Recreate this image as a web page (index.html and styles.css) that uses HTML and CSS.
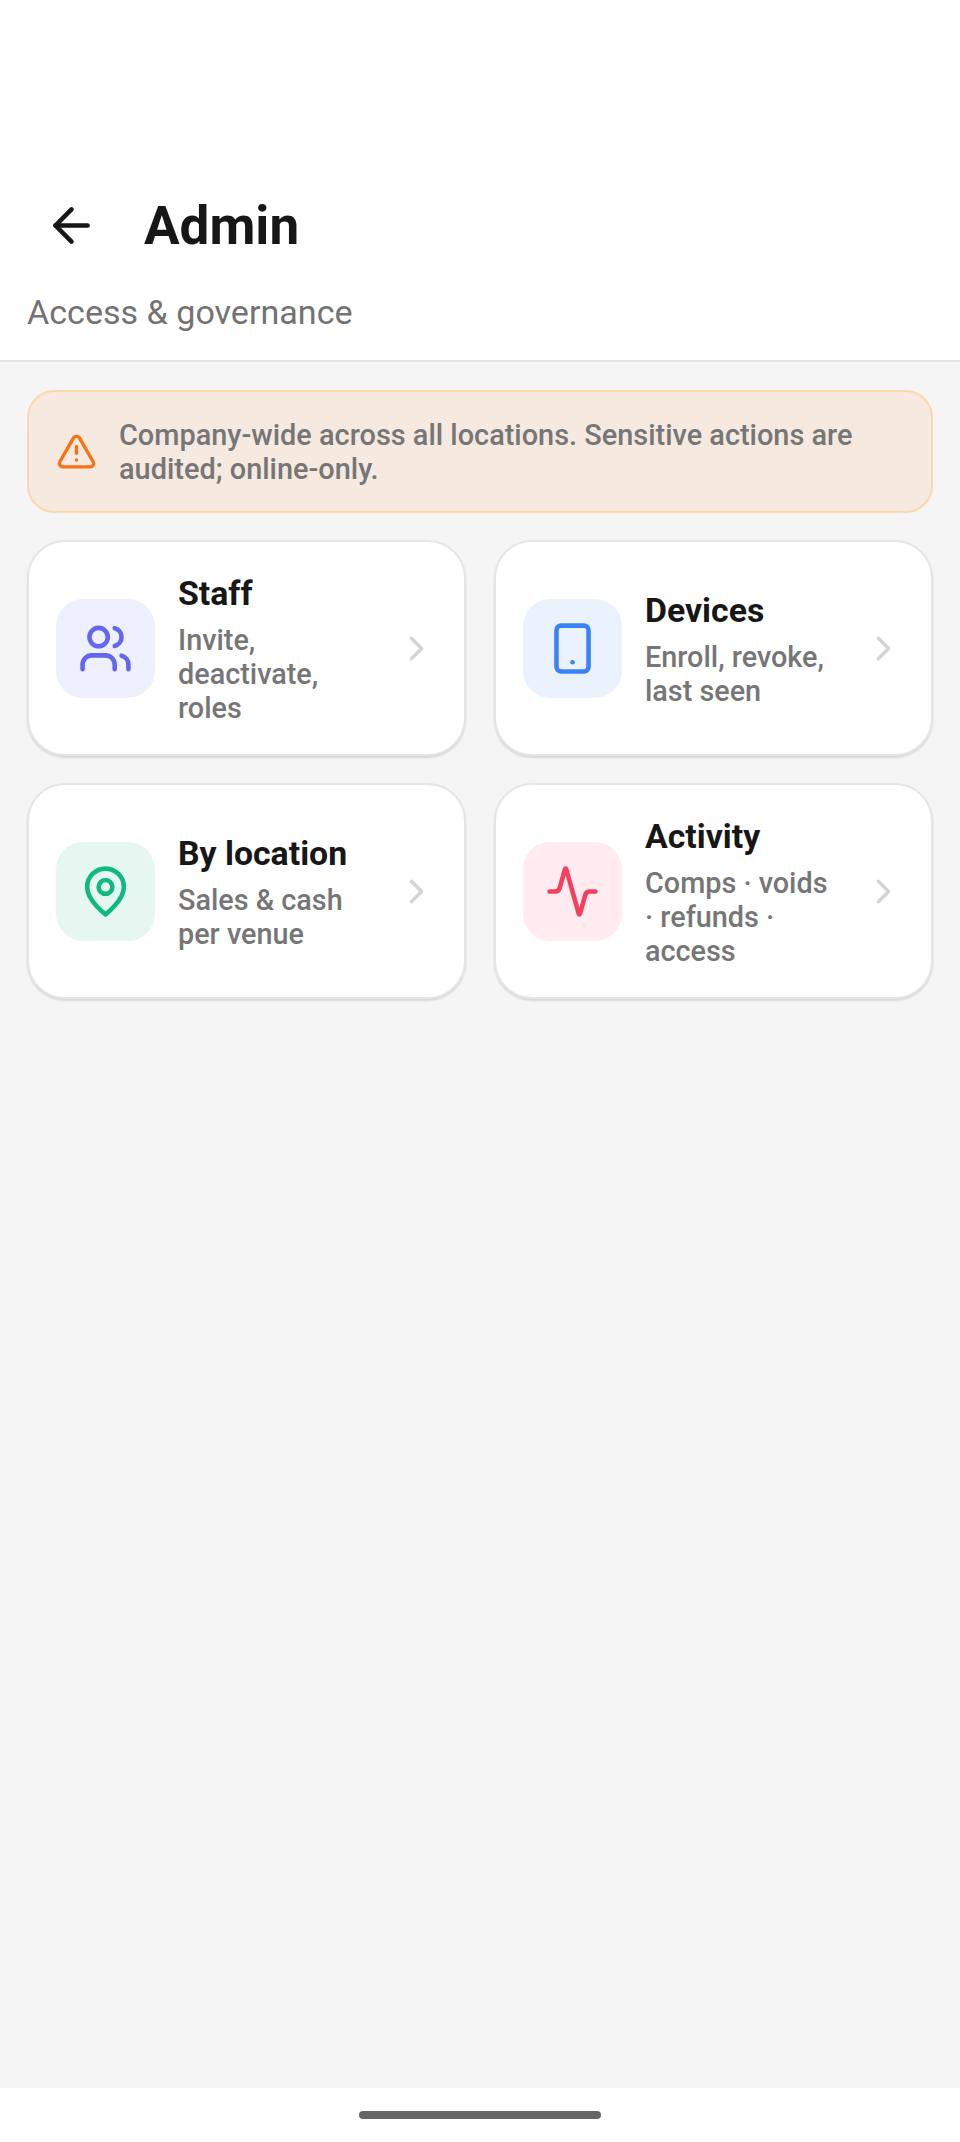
FILE: index.html
```html
<!DOCTYPE html>
<html lang="en">
<head>
    <meta charset="UTF-8">
    <meta name="viewport" content="width=device-width, initial-scale=1.0">
    <title>Admin</title>
    <link rel="stylesheet" href="styles.css">
</head>
<body>
    <div class="screen">
        <header class="header">
            <div class="topbar">
                <svg class="icon back" viewBox="0 0 24 24"><path d="m12 19-7-7 7-7"/><path d="M19 12H5"/></svg>
                <h1>Admin</h1>
            </div>
            <p class="subtitle">Access &amp; governance</p>
        </header>
        <main class="content">
            <div class="notice">
                <svg class="icon notice-icon" viewBox="0 0 24 24"><path d="m21.73 18-8-14a2 2 0 0 0-3.48 0l-8 14A2 2 0 0 0 4 21h16a2 2 0 0 0 1.73-3"/><path d="M12 9v4"/><path d="M12 17h.01"/></svg>
                <p>Company-wide across all locations. Sensitive actions are audited; online-only.</p>
            </div>
            <div class="grid">
                <div class="card">
                    <div class="tile tile-staff">
                        <svg class="icon" viewBox="0 0 24 24"><path d="M16 21v-2a4 4 0 0 0-4-4H6a4 4 0 0 0-4 4v2"/><circle cx="9" cy="7" r="4"/><path d="M22 21v-2a4 4 0 0 0-3-3.87"/><path d="M16 3.13a4 4 0 0 1 0 7.75"/></svg>
                    </div>
                    <div class="card-text">
                        <h2>Staff</h2>
                        <p>Invite, deactivate, roles</p>
                    </div>
                    <svg class="icon chevron" viewBox="0 0 24 24"><path d="m9 18 6-6-6-6"/></svg>
                </div>
                <div class="card">
                    <div class="tile tile-devices">
                        <svg class="icon" viewBox="0 0 24 24"><rect x="5" y="2" width="14" height="20" rx="2"/><path d="M12 18h.01"/></svg>
                    </div>
                    <div class="card-text">
                        <h2>Devices</h2>
                        <p>Enroll, revoke, last seen</p>
                    </div>
                    <svg class="icon chevron" viewBox="0 0 24 24"><path d="m9 18 6-6-6-6"/></svg>
                </div>
                <div class="card">
                    <div class="tile tile-location">
                        <svg class="icon" viewBox="0 0 24 24"><path d="M20 10c0 6-8 12-8 12s-8-6-8-12a8 8 0 0 1 16 0Z"/><circle cx="12" cy="10" r="3"/></svg>
                    </div>
                    <div class="card-text">
                        <h2>By location</h2>
                        <p>Sales &amp; cash per venue</p>
                    </div>
                    <svg class="icon chevron" viewBox="0 0 24 24"><path d="m9 18 6-6-6-6"/></svg>
                </div>
                <div class="card">
                    <div class="tile tile-activity">
                        <svg class="icon" viewBox="0 0 24 24"><path d="M22 12h-2.48a2 2 0 0 0-1.93 1.46l-2.35 8.36a.25.25 0 0 1-.48 0L9.24 2.18a.25.25 0 0 0-.48 0l-2.35 8.36A2 2 0 0 1 4.49 12H2"/></svg>
                    </div>
                    <div class="card-text">
                        <h2>Activity</h2>
                        <p>Comps · voids · refunds · access</p>
                    </div>
                    <svg class="icon chevron" viewBox="0 0 24 24"><path d="m9 18 6-6-6-6"/></svg>
                </div>
            </div>
        </main>
        <footer class="navbar">
            <div class="home-bar"></div>
        </footer>
    </div>
</body>
</html>
```

FILE: styles.css
```css
body {
    font-family: Roboto, sans-serif;
    background: #f5f5f5;
    color: #171717;
    margin: 0;
    padding: 0;
}

p, h1, h2 {
    margin: 0;
}

.screen {
    height: 2142px;
    display: flex;
    flex-direction: column;
    overflow: hidden;
}

.icon {
    display: block;
    width: 55px;
    height: 55px;
    flex: none;
    fill: none;
    stroke: currentColor;
    stroke-width: 2;
    stroke-linecap: round;
    stroke-linejoin: round;
}

.header {
    height: 362px;
    box-sizing: border-box;
    background: #fff;
    border-bottom: 2px solid #e5e5e5;
    padding: 190px 27px 0;
}

.topbar {
    display: flex;
    align-items: center;
    gap: 45px;
    height: 70px;
    padding-left: 17px;
}

.topbar h1 {
    font-size: 53px;
    font-weight: 700;
    line-height: 70px;
    padding-top: 2px;
}

.subtitle {
    margin-top: 30px;
    font-size: 34.1px;
    line-height: 44px;
    color: #737373;
}

.content {
    flex: 1;
    padding: 28px 27px;
    display: flex;
    flex-direction: column;
    gap: 27px;
}

.notice {
    display: flex;
    align-items: center;
    gap: 22px;
    padding: 25.5px 27px;
    background: #f5e9e0;
    border: 2px solid #fed7aa;
    border-radius: 27.5px;
}

.notice-icon {
    width: 41px;
    height: 41px;
    color: #f97316;
}

.notice p {
    font-size: 28.9px;
    line-height: 34px;
    font-weight: 500;
    color: #767676;
}

.grid {
    display: grid;
    grid-template-columns: 1fr 1fr;
    gap: 27px 28px;
}

.card {
    display: flex;
    align-items: center;
    min-height: 216px;
    box-sizing: border-box;
    padding: 27px;
    background: #fff;
    border: 2px solid #e5e5e5;
    border-radius: 38px;
    box-shadow: 0 2px 2px rgba(0, 0, 0, 0.12);
}

.tile {
    width: 99px;
    height: 99px;
    flex: none;
    display: flex;
    align-items: center;
    justify-content: center;
    border-radius: 27.5px;
}

.tile-staff { background: #eff0fe; color: #6366f1; }
.tile-devices { background: #ebf2fe; color: #3b82f6; }
.tile-location { background: #e6f7f1; color: #10b981; }
.tile-activity { background: #ffebf0; color: #f43f5e; }

.card-text {
    flex: 1;
    min-width: 0;
    margin: 0 21px 0 23px;
}

.card-text h2 {
    font-size: 33.8px;
    line-height: 44px;
    font-weight: 700;
    padding-top: 1px;
    margin-bottom: 7px;
}

.card-text p {
    font-size: 28.8px;
    line-height: 34px;
    font-weight: 500;
    color: #767676;
}

.chevron {
    width: 41px;
    height: 41px;
    color: #d4d4d4;
}

.navbar {
    height: 54px;
    flex: none;
    background: #fff;
    display: flex;
    justify-content: center;
    padding-top: 23px;
    box-sizing: border-box;
}

.home-bar {
    width: 242px;
    height: 8px;
    border-radius: 4px;
    background: #666;
}
```
